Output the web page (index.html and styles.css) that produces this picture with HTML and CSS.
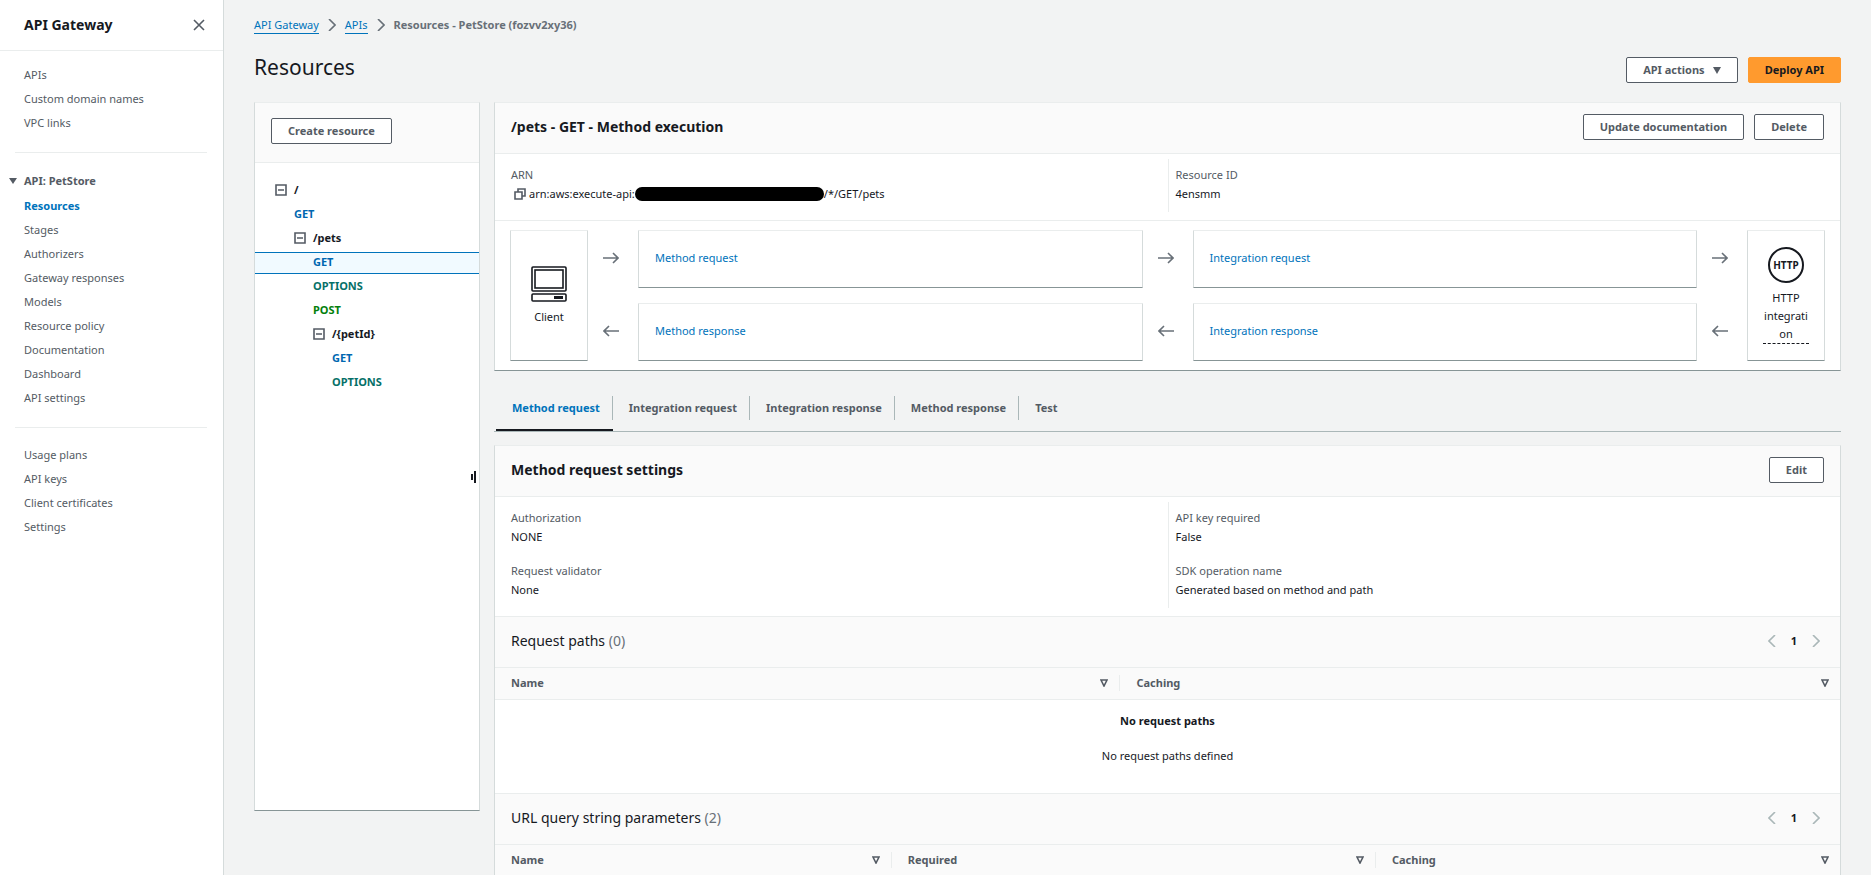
FILE: index.html
```html
<!DOCTYPE html>
<html lang="en">
<head>
  <meta charset="UTF-8">
  <meta name="viewport" content="width=device-width, initial-scale=1">
  <title>API Gateway - Resources</title>
  <link rel="stylesheet" href="styles.css">
</head>
<body>
  <!-- shared icons -->
  <svg class="sprite" aria-hidden="true">
    <symbol id="arrow-right" viewBox="0 0 16 12"><path d="M0 6h15M10 1l5 5-5 5" /></symbol>
    <symbol id="arrow-left" viewBox="0 0 16 12"><path d="M16 6H1M6 1L1 6l5 5" /></symbol>
    <symbol id="chevron-right" viewBox="0 0 8 12"><path d="M1 0l6 6-6 6" /></symbol>
    <symbol id="chevron-left" viewBox="0 0 8 12"><path d="M7 0L1 6l6 6" /></symbol>
    <symbol id="sort" viewBox="0 0 8 8"><path d="M1 1h6L4 7z" /></symbol>
    <symbol id="minus-box" viewBox="0 0 12 12"><path d="M1 1h10v10H1zM3 6h6" /></symbol>
  </svg>

  <div class="app">
    <nav class="sidebar">
      <div class="sidebar-header">
        <h2>API Gateway</h2>
        <button class="icon-btn" aria-label="Close">
          <svg width="12" height="12" viewBox="0 0 12 12" class="icon"><path d="M1 1l10 10M11 1L1 11" /></svg>
        </button>
      </div>
      <ul class="nav-list">
        <li><a href="#">APIs</a></li>
        <li><a href="#">Custom domain names</a></li>
        <li><a href="#">VPC links</a></li>
      </ul>
      <hr>
      <button class="nav-group"><svg width="8" height="6" viewBox="0 0 8 6"><path d="M0 0h8L4 6z" fill="currentColor" /></svg>API: PetStore</button>
      <ul class="nav-list nested">
        <li><a href="#" class="active">Resources</a></li>
        <li><a href="#">Stages</a></li>
        <li><a href="#">Authorizers</a></li>
        <li><a href="#">Gateway responses</a></li>
        <li><a href="#">Models</a></li>
        <li><a href="#">Resource policy</a></li>
        <li><a href="#">Documentation</a></li>
        <li><a href="#">Dashboard</a></li>
        <li><a href="#">API settings</a></li>
      </ul>
      <hr>
      <ul class="nav-list last">
        <li><a href="#">Usage plans</a></li>
        <li><a href="#">API keys</a></li>
        <li><a href="#">Client certificates</a></li>
        <li><a href="#">Settings</a></li>
      </ul>
    </nav>

    <main class="content">
      <div class="breadcrumbs">
        <a href="#">API Gateway</a>
        <svg width="8" height="12" class="icon"><use href="#chevron-right" /></svg>
        <a href="#">APIs</a>
        <svg width="8" height="12" class="icon"><use href="#chevron-right" /></svg>
        <span>Resources - PetStore (fozvv2xy36)</span>
      </div>

      <div class="page-header">
        <h1>Resources</h1>
        <div class="actions">
          <button class="btn">API actions <svg width="8" height="7" viewBox="0 0 8 7"><path d="M0 0h8L4 7z" fill="currentColor" /></svg></button>
          <button class="btn primary">Deploy API</button>
        </div>
      </div>

      <div class="columns">
        <section class="panel tree-panel">
          <div class="tree-header">
            <button class="btn">Create resource</button>
          </div>
          <ul class="tree">
            <li class="row level-1"><button class="icon-btn" aria-label="Collapse /"><svg width="12" height="12" class="icon"><use href="#minus-box" /></svg></button>/</li>
            <li class="row level-2"><a href="#" class="get">GET</a></li>
            <li class="row level-2"><button class="icon-btn" aria-label="Collapse /pets"><svg width="12" height="12" class="icon"><use href="#minus-box" /></svg></button>/pets</li>
            <li class="row level-3 selected"><a href="#" class="get">GET</a></li>
            <li class="row level-3"><a href="#" class="options">OPTIONS</a></li>
            <li class="row level-3"><a href="#" class="post">POST</a></li>
            <li class="row level-3"><button class="icon-btn" aria-label="Collapse /{petId}"><svg width="12" height="12" class="icon"><use href="#minus-box" /></svg></button>/{petId}</li>
            <li class="row level-4"><a href="#" class="get">GET</a></li>
            <li class="row level-4"><a href="#" class="options">OPTIONS</a></li>
          </ul>
          <div class="resize-handle"></div>
        </section>

        <div class="details">
          <section class="panel">
            <div class="panel-header">
              <h3>/pets - GET - Method execution</h3>
              <div class="actions">
                <button class="btn">Update documentation</button>
                <button class="btn">Delete</button>
              </div>
            </div>
            <div class="info">
              <dl>
                <dt>ARN</dt>
                <dd class="arn">
                  <button class="icon-btn" aria-label="Copy ARN">
                    <svg width="12" height="12" viewBox="0 0 12 12" class="icon"><path d="M1 4h7v7H1zM4 4V1h7v7H8" /></svg>
                  </button>
                  <span>arn:aws:execute-api:</span><span class="redacted"></span><span>/*/GET/pets</span>
                </dd>
              </dl>
              <dl>
                <dt>Resource ID</dt>
                <dd>4ensmm</dd>
              </dl>
            </div>
            <div class="flow">
              <div class="card endpoint client">
                <svg width="38" height="38" viewBox="0 0 38 38" class="computer">
                  <rect x="2" y="2" width="34" height="24" rx="1" />
                  <rect x="5" y="5" width="28" height="18" />
                  <rect x="2" y="29" width="34" height="7" rx="1" />
                  <path d="M24 32.500h9" class="slot" />
                </svg>
                <span>Client</span>
              </div>
              <div class="arrows">
                <svg width="16" height="12" class="icon"><use href="#arrow-right" /></svg>
                <svg width="16" height="12" class="icon"><use href="#arrow-left" /></svg>
              </div>
              <div class="steps">
                <div class="card"><a href="#">Method request</a></div>
                <div class="card"><a href="#">Method response</a></div>
              </div>
              <div class="arrows">
                <svg width="16" height="12" class="icon"><use href="#arrow-right" /></svg>
                <svg width="16" height="12" class="icon"><use href="#arrow-left" /></svg>
              </div>
              <div class="steps">
                <div class="card"><a href="#">Integration request</a></div>
                <div class="card"><a href="#">Integration response</a></div>
              </div>
              <div class="arrows">
                <svg width="16" height="12" class="icon"><use href="#arrow-right" /></svg>
                <svg width="16" height="12" class="icon"><use href="#arrow-left" /></svg>
              </div>
              <div class="card endpoint http">
                <div class="http-icon">HTTP</div>
                <span>HTTP integration</span>
              </div>
            </div>
          </section>

          <div class="tabs" role="tablist">
            <button role="tab" class="active" aria-selected="true">Method request</button>
            <button role="tab">Integration request</button>
            <button role="tab">Integration response</button>
            <button role="tab">Method response</button>
            <button role="tab">Test</button>
          </div>

          <section class="panel">
            <div class="panel-header">
              <h3>Method request settings</h3>
              <button class="btn">Edit</button>
            </div>
            <div class="info">
              <dl>
                <dt>Authorization</dt>
                <dd>NONE</dd>
                <dt>Request validator</dt>
                <dd>None</dd>
              </dl>
              <dl>
                <dt>API key required</dt>
                <dd>False</dd>
                <dt>SDK operation name</dt>
                <dd>Generated based on method and path</dd>
              </dl>
            </div>

            <div class="panel-header sub">
              <h3>Request paths <span>(0)</span></h3>
              <div class="pagination">
                <button class="icon-btn" aria-label="Previous page"><svg width="8" height="12" class="icon"><use href="#chevron-left" /></svg></button>
                <button class="page">1</button>
                <button class="icon-btn" aria-label="Next page"><svg width="8" height="12" class="icon"><use href="#chevron-right" /></svg></button>
              </div>
            </div>
            <table class="paths">
              <thead>
                <tr>
                  <th class="name"><div>Name <svg width="8" height="8" class="icon"><use href="#sort" /></svg></div></th>
                  <th><div>Caching <svg width="8" height="8" class="icon"><use href="#sort" /></svg></div></th>
                </tr>
              </thead>
              <tbody>
                <tr>
                  <td colspan="2" class="empty">
                    <strong>No request paths</strong>
                    <p>No request paths defined</p>
                  </td>
                </tr>
              </tbody>
            </table>

            <div class="panel-header sub">
              <h3>URL query string parameters <span>(2)</span></h3>
              <div class="pagination">
                <button class="icon-btn" aria-label="Previous page"><svg width="8" height="12" class="icon"><use href="#chevron-left" /></svg></button>
                <button class="page">1</button>
                <button class="icon-btn" aria-label="Next page"><svg width="8" height="12" class="icon"><use href="#chevron-right" /></svg></button>
              </div>
            </div>
            <table class="params">
              <thead>
                <tr>
                  <th class="name"><div>Name <svg width="8" height="8" class="icon"><use href="#sort" /></svg></div></th>
                  <th class="required"><div>Required <svg width="8" height="8" class="icon"><use href="#sort" /></svg></div></th>
                  <th><div>Caching <svg width="8" height="8" class="icon"><use href="#sort" /></svg></div></th>
                </tr>
              </thead>
            </table>
          </section>
        </div>
      </div>
    </main>
  </div>
</body>
</html>
```
FILE: styles.css
```css
* {
  box-sizing: border-box;
}

body {
  margin: 0;
  font-family: "Noto Sans", "Open Sans", sans-serif;
  font-size: 11px;
  line-height: 18px;
  color: #16191f;
  background: #f2f3f3;
}

h1, h2, h3, p, ul, dl, dd {
  margin: 0;
  padding: 0;
}

ul {
  list-style: none;
}

a {
  color: #0073bb;
  text-decoration: none;
}

button {
  font: inherit;
  color: inherit;
  cursor: pointer;
}

.sprite {
  display: none;
}

.icon {
  display: block;
  fill: none;
  stroke: #545b64;
  stroke-width: 1.6;
}

.icon-btn {
  padding: 0;
  border: none;
  background: none;
}

.app {
  display: flex;
  height: 100vh;
  overflow: hidden;
}

/* Sidebar */
.sidebar {
  flex: 0 0 224px;
  background: #fff;
  border-right: 1px solid #d5dbdb;
  color: #545b64;
}

.sidebar-header {
  display: flex;
  align-items: center;
  justify-content: space-between;
  height: 51px;
  padding: 0 18px 0 24px;
  border-bottom: 1px solid #eaeded;
}

.sidebar-header h2 {
  font-size: 14px;
  color: #16191f;
}

.nav-list {
  padding: 12px 0 17px 24px;
}

.nav-list a {
  display: block;
  line-height: 24px;
  color: #545b64;
}

.nav-list .active {
  font-weight: bold;
  color: #0073bb;
}

.nav-list.nested {
  padding-top: 1px;
}

.nav-list.last {
  padding-top: 15px;
}

.sidebar hr {
  margin: 0 16px 0 15px;
  border: none;
  border-top: 1px solid #eaeded;
}

.nav-group {
  display: flex;
  align-items: center;
  gap: 7px;
  margin-top: 16px;
  padding: 0 0 0 9px;
  border: none;
  background: none;
  font-weight: bold;
  line-height: 24px;
}

/* Page */
.content {
  flex: 1;
  min-width: 0;
  padding: 16px 30px 0;
}

.breadcrumbs {
  display: flex;
  align-items: center;
  gap: 9px;
  color: #687078;
  font-weight: bold;
}

.breadcrumbs a {
  font-weight: normal;
  line-height: 16px;
  border-bottom: 1px solid #0073bb;
}

.breadcrumbs .icon {
  stroke: #687078;
}

.page-header {
  display: flex;
  justify-content: space-between;
  align-items: flex-start;
  height: 68px;
  padding-top: 18px;
}

h1 {
  font-size: 21px;
  font-weight: normal;
  line-height: 30px;
}

.actions {
  display: flex;
  gap: 10px;
}

.page-header .actions {
  padding-top: 5px;
}

.btn {
  display: flex;
  align-items: center;
  gap: 8px;
  height: 26px;
  padding: 0 16px;
  border: 1px solid #545b64;
  border-radius: 2px;
  background: #fff;
  color: #545b64;
  font-weight: bold;
}

.btn.primary {
  background: #ff9a2e;
  border-color: #ff9a2e;
  color: #16191f;
}

.columns {
  display: flex;
  align-items: flex-start;
  gap: 14px;
}

.panel {
  background: #fff;
  border: 1px solid #d5dbdb;
  border-top-color: #eaeded;
  border-bottom-color: #879596;
}

/* Resource tree */
.tree-panel {
  position: relative;
  flex: 0 0 226px;
  height: calc(100vh - 166px);
}

.tree-header {
  height: 60px;
  padding: 15px 16px;
  background: #fafafa;
  border-bottom: 1px solid #eaeded;
}

.tree {
  padding-top: 16px;
}

.row {
  display: flex;
  align-items: center;
  gap: 7px;
  height: 24px;
  padding-bottom: 2px;
  font-weight: bold;
}

.level-1 {
  padding-left: 20px;
}

.level-2 {
  padding-left: 39px;
}

.level-3 {
  padding-left: 58px;
}

.level-4 {
  padding-left: 77px;
}

.selected {
  height: 22px;
  margin: 1px 0;
  background: #f1faff;
  border: solid #0073bb;
  border-width: 1px 0;
}

.get {
  color: #0067b0;
}

.options {
  color: #067068;
}

.post {
  color: #037f0c;
}

.resize-handle {
  position: absolute;
  top: 368px;
  right: 3px;
  width: 5px;
  height: 12px;
  border-right: 2px solid #16191f;
}

.resize-handle::before {
  content: "";
  position: absolute;
  top: 3px;
  left: 0;
  width: 2px;
  height: 6px;
  background: #16191f;
}

/* Details */
.details {
  flex: 1;
  min-width: 0;
}

.panel-header {
  display: flex;
  align-items: flex-start;
  justify-content: space-between;
  height: 51px;
  padding: 11px 16px;
  background: #fafafa;
  border-bottom: 1px solid #eaeded;
}

.panel-header h3 {
  font-size: 14px;
  line-height: 26px;
}

.panel-header.sub {
  border-top: 1px solid #eaeded;
  height: 52px;
}

.sub h3 {
  font-weight: normal;
}

.sub h3 span {
  color: #687078;
}

.info {
  display: grid;
  grid-template-columns: 1fr 1fr;
  padding: 5px 0 8px;
}

.info dl {
  padding: 6px 16px 9px;
}

.info dl + dl {
  padding-left: 7px;
  border-left: 1px solid #eaeded;
}

.info dt {
  color: #545b64;
  line-height: 19px;
}

.info dd {
  line-height: 19px;
}

.info dd + dt {
  margin-top: 15px;
}

.arn {
  display: flex;
  align-items: center;
}

.arn .icon-btn {
  margin: 0 3px;
}

.redacted {
  width: 189px;
  height: 14px;
  border-radius: 7px;
  background: #000;
}

/* Request flow */
.flow {
  display: flex;
  padding: 9px 15px;
  border-top: 1px solid #eaeded;
}

.card {
  display: flex;
  align-items: center;
  height: 58px;
  padding: 0 16px 2px;
  border: 1px solid #d5dbdb;
  border-top-color: #eaeded;
  border-bottom-color: #879596;
  border-radius: 1px;
}

.steps {
  flex: 1;
  display: flex;
  flex-direction: column;
  gap: 15px;
}

.arrows {
  flex: 0 0 50px;
  display: flex;
  flex-direction: column;
  align-items: center;
  gap: 61px;
  padding: 22px 4px 0 0;
}

.arrows .icon {
  stroke: #687078;
}

.endpoint {
  flex: 0 0 78px;
  flex-direction: column;
  justify-content: center;
  height: 131px;
  padding: 0 15px;
  text-align: center;
}

.client {
  gap: 5px;
}

.computer {
  fill: none;
  stroke: #16191f;
  stroke-width: 1.6;
}

.computer .slot {
  stroke-width: 3;
}

.http-icon {
  width: 36px;
  height: 36px;
  margin-bottom: 6px;
  border: 2px solid #16191f;
  border-radius: 50%;
  font-size: 10px;
  font-weight: bold;
  line-height: 32px;
}

.http span {
  width: 46px;
  overflow-wrap: break-word;
  border-bottom: 1px dashed #16191f;
}

/* Tabs */
.tabs {
  display: flex;
  height: 61px;
  margin-bottom: 13px;
  padding: 25px 0 0 2px;
  border-bottom: 1px solid #aab7b8;
}

.tabs button {
  position: relative;
  height: 35px;
  padding: 0 13px 9px 16px;
  border: none;
  border-bottom: 2px solid transparent;
  background: none;
  color: #545b64;
  font-weight: bold;
}

.tabs button:not(:last-child)::after {
  content: "";
  position: absolute;
  top: 0;
  right: 0;
  height: 24px;
  border-right: 1px solid #aab7b8;
}

.tabs .active {
  color: #0073bb;
  border-bottom-color: #16191f;
}

/* Tables */
.pagination {
  display: flex;
  align-items: center;
  gap: 9px;
  height: 26px;
  padding-right: 4px;
}

.pagination .icon {
  stroke: #aab7b8;
}

.page {
  width: 18px;
  padding: 0;
  border: none;
  background: none;
  font-weight: bold;
}

table {
  width: 100%;
  border-collapse: collapse;
  table-layout: fixed;
}

th {
  height: 31px;
  padding: 0;
  background: #fafafa;
  border-bottom: 1px solid #eaeded;
  color: #545b64;
  text-align: left;
}

th div {
  display: flex;
  align-items: center;
  justify-content: space-between;
  height: 16px;
  padding: 0 11px 0 16px;
}

th:not(:last-child) div {
  border-right: 1px solid #eaeded;
}

.paths .name {
  width: 46.5%;
}

.params .name {
  width: 29.5%;
}

.params .required {
  width: 36%;
}

.empty {
  height: 94px;
  padding: 12px 0 0;
  text-align: center;
  vertical-align: top;
}

.empty p {
  padding-top: 17px;
}
```
